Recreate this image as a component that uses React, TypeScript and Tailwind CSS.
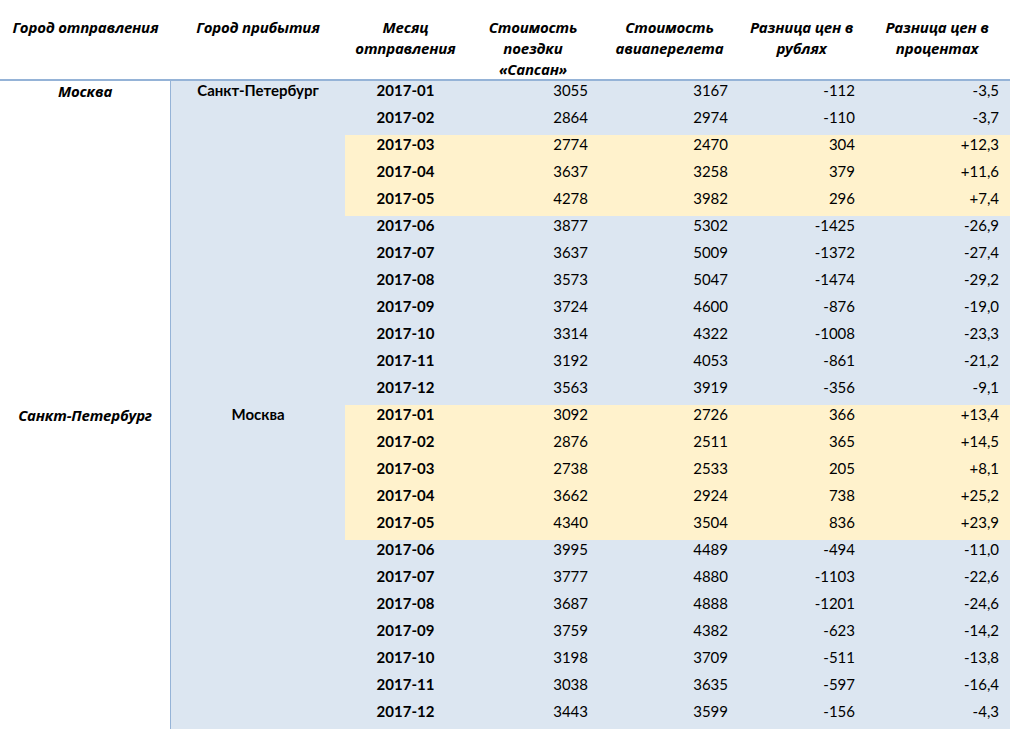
const rows: [string, number, number, number, string, boolean][] = [
  ["2017-01", 3055, 3167, -112, "-3,5", false],
  ["2017-02", 2864, 2974, -110, "-3,7", false],
  ["2017-03", 2774, 2470, 304, "+12,3", true],
  ["2017-04", 3637, 3258, 379, "+11,6", true],
  ["2017-05", 4278, 3982, 296, "+7,4", true],
  ["2017-06", 3877, 5302, -1425, "-26,9", false],
  ["2017-07", 3637, 5009, -1372, "-27,4", false],
  ["2017-08", 3573, 5047, -1474, "-29,2", false],
  ["2017-09", 3724, 4600, -876, "-19,0", false],
  ["2017-10", 3314, 4322, -1008, "-23,3", false],
  ["2017-11", 3192, 4053, -861, "-21,2", false],
  ["2017-12", 3563, 3919, -356, "-9,1", false],
  ["2017-01", 3092, 2726, 366, "+13,4", true],
  ["2017-02", 2876, 2511, 365, "+14,5", true],
  ["2017-03", 2738, 2533, 205, "+8,1", true],
  ["2017-04", 3662, 2924, 738, "+25,2", true],
  ["2017-05", 4340, 3504, 836, "+23,9", true],
  ["2017-06", 3995, 4489, -494, "-11,0", false],
  ["2017-07", 3777, 4880, -1103, "-22,6", false],
  ["2017-08", 3687, 4888, -1201, "-24,6", false],
  ["2017-09", 3759, 4382, -623, "-14,2", false],
  ["2017-10", 3198, 3709, -511, "-13,8", false],
  ["2017-11", 3038, 3635, -597, "-16,4", false],
  ["2017-12", 3443, 3599, -156, "-4,3", false],
];

const cols = "grid grid-cols-[171px_174px_121px_134px_139px_125px_146px]";
const italic = { fontFamily: "'Open Sans', sans-serif" };

export default function App() {
  return (
    <div
      className="w-[1024px] h-[733px] bg-white text-black overflow-hidden"
      style={{ fontFamily: "Lato, 'Open Sans', sans-serif" }}
    >
      <div
        className={`${cols} h-[81px] border-b-2 border-[#95b3d7] w-[1010px] text-[15px] font-bold italic leading-[21px] pt-[17px] text-center tracking-[-0.2px]`}
        style={italic}
      >
        <div>Город отправления</div>
        <div>Город прибытия</div>
        <div className="px-1">Месяц отправления</div>
        <div className="px-4">Стоимость поездки «Сапсан»</div>
        <div className="px-1">Стоимость авиаперелета</div>
        <div className="px-2">Разница цен в рублях</div>
        <div className="px-4">Разница цен в процентах</div>
      </div>
      <div className={`${cols} w-[1010px] text-[15px] leading-[18px]`}>
        {rows.map((r, i) => {
          const bg = r[5] ? "bg-[#fff2cc]" : "bg-[#dce6f1]";
          return (
            <div key={i} className="contents">
              <div
                className="h-[27px] bg-white border-r border-[#95b3d7] text-center text-[15px] font-bold italic tracking-[-0.2px] pt-[1px]"
                style={italic}
              >
                {i === 0 ? "Москва" : i === 12 ? "Санкт-Петербург" : ""}
              </div>
              <div className="h-[27px] bg-[#dce6f1] text-center font-bold">
                {i === 0 ? "Санкт-Петербург" : i === 12 ? "Москва" : ""}
              </div>
              <div className={`h-[27px] ${bg} text-center font-bold`}>{r[0]}</div>
              <div className={`h-[27px] ${bg} text-right pr-[12px]`}>{r[1]}</div>
              <div className={`h-[27px] ${bg} text-right pr-[11px]`}>{r[2]}</div>
              <div className={`h-[27px] ${bg} text-right pr-[9px]`}>{r[3]}</div>
              <div className={`h-[27px] ${bg} text-right pr-[11px]`}>{r[4]}</div>
            </div>
          );
        })}
      </div>
    </div>
  );
}
